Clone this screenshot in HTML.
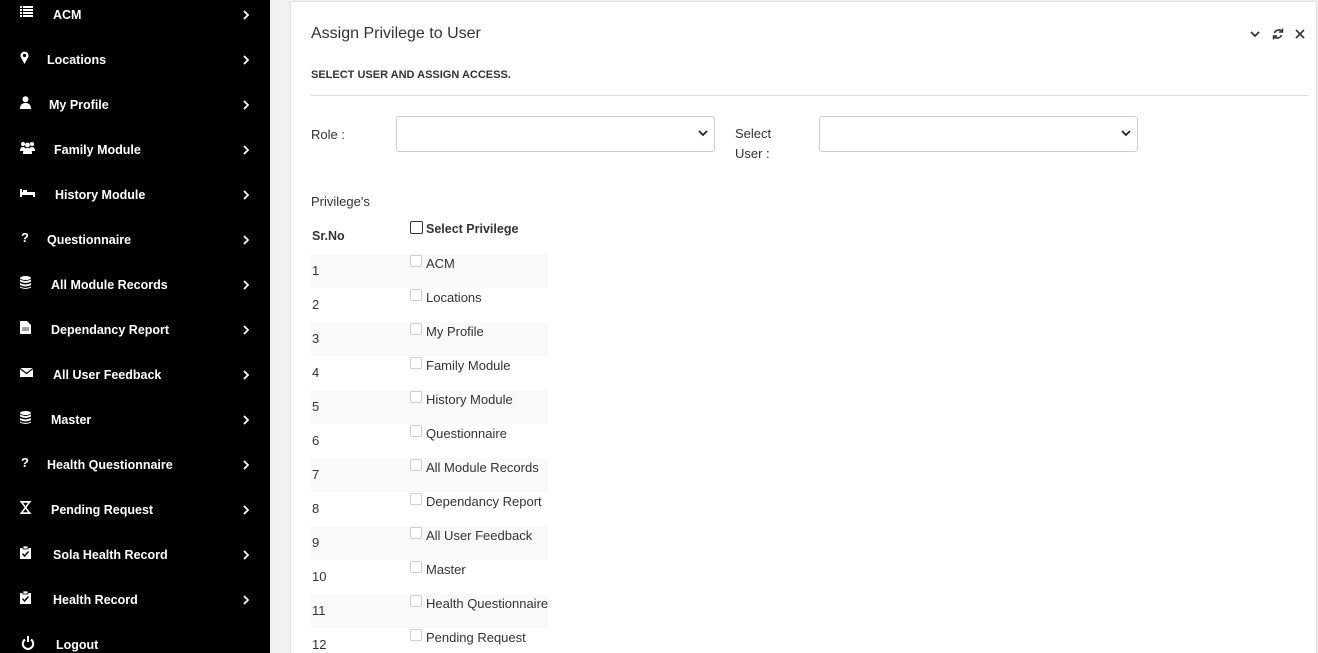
<!DOCTYPE html>
<html><head><meta charset="utf-8"><style>
*{box-sizing:border-box;margin:0;padding:0}
html,body{width:1318px;height:653px;overflow:hidden}
body{background:#f0f0f0;font-family:"Liberation Sans",sans-serif;position:relative}
.sb{position:absolute;left:0;top:1px;width:270px;height:653px;background:#000}
.it{position:absolute;left:0;width:270px;height:20px;color:#fff;font-weight:bold;font-size:12.5px}
.it .ic{position:absolute;left:20px;top:0px;width:14px;height:14px;font-size:13px;line-height:14px;text-align:left}
.it .tx{position:absolute;top:2px}
.it .ch{position:absolute;left:243px;top:4px}
.panel{position:absolute;left:290px;top:1px;width:1027px;height:660px;background:#fff;border:1px solid #e2e2e2;border-radius:3px}
.t{position:absolute;color:#333;font-size:13px}
.sel{position:absolute;height:36px;border:1px solid #ccc;border-radius:3px;background:#fff}
.sel svg{position:absolute;right:6px;top:13px}
.row{position:absolute;left:311px;width:237px;height:34px}
.cb{position:absolute;left:410px;width:12px;height:12px;border:1px solid #ccc;border-radius:2px;background:#fff}
</style></head><body>
<svg width="0" height="0" style="position:absolute"><defs>
<symbol id="chv" viewBox="0 0 6 10"><path d="M1 1l4 4-4 4" stroke="#fff" stroke-width="1.8" fill="none"/></symbol>
<symbol id="db" viewBox="0 0 11 13"><ellipse cx="5.5" cy="2" rx="5.5" ry="2" fill="#fff"/><path d="M0 3.5q5.5 3 11 0v2q-5.5 3-11 0zM0 7q5.5 3 11 0v2q-5.5 3-11 0zM0 10.5q5.5 3 11 0v1q-5.5 3-11 0z" fill="#fff"/></symbol>
<symbol id="clip" viewBox="0 0 11 13"><rect y="2" width="11" height="11" fill="#fff"/><rect x="3" y="0" width="5" height="3" fill="#fff" stroke="#000" stroke-width=".8"/><path d="M2.5 7.5l2 2.5 4-4.5" stroke="#000" fill="none" stroke-width="1.4"/></symbol>
</defs></svg>
<div class="sb" style="top:0"></div>
<div class="sb" style="background:none">
<div class="it" style="top:5px"><span class="ic"><svg width="13" height="11"><rect x="0" y="0" width="2" height="2" fill="#fff"/><rect x="3" y="0" width="10" height="2" fill="#fff"/><rect x="0" y="3" width="2" height="2" fill="#fff"/><rect x="3" y="3" width="10" height="2" fill="#fff"/><rect x="0" y="6" width="2" height="2" fill="#fff"/><rect x="3" y="6" width="10" height="2" fill="#fff"/><rect x="0" y="9" width="2" height="2" fill="#fff"/><rect x="3" y="9" width="10" height="2" fill="#fff"/></svg></span><span class="tx" style="left:53px">ACM</span><svg class="ch" width="6" height="10"><use href="#chv"/></svg></div>
<div class="it" style="top:50px"><span class="ic"><svg width="9" height="13"><path d="M4.5 13L1 6.5A4 4 0 1 1 8 6.5z" fill="#fff"/><circle cx="4.5" cy="4.5" r="1.6" fill="#000"/></svg></span><span class="tx" style="left:47px">Locations</span><svg class="ch" width="6" height="10"><use href="#chv"/></svg></div>
<div class="it" style="top:95px"><span class="ic"><svg width="11" height="13"><circle cx="5.5" cy="3.2" r="3" fill="#fff"/><path d="M0 13q0-6 5.5-6t5.5 6z" fill="#fff"/></svg></span><span class="tx" style="left:49px">My Profile</span><svg class="ch" width="6" height="10"><use href="#chv"/></svg></div>
<div class="it" style="top:140px"><span class="ic"><svg width="15" height="13"><circle cx="3" cy="3" r="2" fill="#fff"/><circle cx="12" cy="3" r="2" fill="#fff"/><circle cx="7.5" cy="4" r="2.4" fill="#fff"/><path d="M0 10q0-4 3-4t3 4zM9 10q0-4 3-4t3 4zM3 13q0-6 4.5-6t4.5 6z" fill="#fff"/></svg></span><span class="tx" style="left:54px">Family Module</span><svg class="ch" width="6" height="10"><use href="#chv"/></svg></div>
<div class="it" style="top:185px"><span class="ic"><svg width="15" height="13"><rect x="0" y="3" width="2" height="8" fill="#fff"/><rect x="0" y="6" width="15" height="3" fill="#fff"/><rect x="3" y="4" width="4" height="2" fill="#fff"/><rect x="13" y="6" width="2" height="5" fill="#fff"/></svg></span><span class="tx" style="left:55px">History Module</span><svg class="ch" width="6" height="10"><use href="#chv"/></svg></div>
<div class="it" style="top:230px"><span class="ic" style="left:21px">?</span><span class="tx" style="left:47px">Questionnaire</span><svg class="ch" width="6" height="10"><use href="#chv"/></svg></div>
<div class="it" style="top:275px"><span class="ic"><svg width="11" height="13"><use href="#db"/></svg></span><span class="tx" style="left:51px">All Module Records</span><svg class="ch" width="6" height="10"><use href="#chv"/></svg></div>
<div class="it" style="top:320px"><span class="ic"><svg width="11" height="13"><path d="M0 0h7l4 4v9H0z" fill="#fff"/><path d="M2 7h7M2 9h7" stroke="#000" stroke-width=".8"/></svg></span><span class="tx" style="left:51px">Dependancy Report</span><svg class="ch" width="6" height="10"><use href="#chv"/></svg></div>
<div class="it" style="top:365px"><span class="ic"><svg width="13" height="13"><rect y="2" width="13" height="9" fill="#fff"/><path d="M0 2.5l6.5 5 6.5-5" stroke="#000" stroke-width="1.2" fill="none"/></svg></span><span class="tx" style="left:53px">All User Feedback</span><svg class="ch" width="6" height="10"><use href="#chv"/></svg></div>
<div class="it" style="top:410px"><span class="ic"><svg width="11" height="13"><use href="#db"/></svg></span><span class="tx" style="left:51px">Master</span><svg class="ch" width="6" height="10"><use href="#chv"/></svg></div>
<div class="it" style="top:455px"><span class="ic" style="left:21px">?</span><span class="tx" style="left:47px">Health Questionnaire</span><svg class="ch" width="6" height="10"><use href="#chv"/></svg></div>
<div class="it" style="top:500px"><span class="ic"><svg width="11" height="13"><path d="M0 0.5h11M0 12.5h11" stroke="#fff" stroke-width="1.6"/><path d="M1.5 1h8L5.5 6.5 9.5 12h-8L5.5 6.5z" stroke="#fff" stroke-width="1.5" fill="none"/></svg></span><span class="tx" style="left:51px">Pending Request</span><svg class="ch" width="6" height="10"><use href="#chv"/></svg></div>
<div class="it" style="top:545px"><span class="ic"><svg width="11" height="13"><use href="#clip"/></svg></span><span class="tx" style="left:53px">Sola Health Record</span><svg class="ch" width="6" height="10"><use href="#chv"/></svg></div>
<div class="it" style="top:590px"><span class="ic"><svg width="11" height="13"><use href="#clip"/></svg></span><span class="tx" style="left:53px">Health Record</span><svg class="ch" width="6" height="10"><use href="#chv"/></svg></div>
<div class="it" style="top:635px"><span class="ic" style="left:21px"><svg width="14" height="14"><path d="M4 3.5A5.2 5.2 0 1 0 10 3.5" stroke="#fff" stroke-width="2" fill="none"/><path d="M7 0v6" stroke="#fff" stroke-width="2"/></svg></span><span class="tx" style="left:56px">Logout</span></div>
</div>
<div class="panel"></div>
<div class="t" style="left:311px;top:25px;font-size:16px">Assign Privilege to User</div>
<svg style="position:absolute;left:1250px;top:28px" width="60" height="12"><path d="M1 4l4 4 4-4" stroke="#333" stroke-width="1.8" fill="none"/><path d="M32.5 4a4.5 4.5 0 0 0-8 1M23.5 8a4.5 4.5 0 0 0 8 -1" stroke="#333" stroke-width="1.6" fill="none"/><path d="M32.5 0.5v3.5h-3.5M23.5 11.5V8h3.5" stroke="#333" stroke-width="1.5" fill="none"/><path d="M46 2l8 8M54 2l-8 8" stroke="#333" stroke-width="1.6"/></svg>
<div class="t" style="left:311px;top:69px;font-size:11px;font-weight:bold">SELECT USER AND ASSIGN ACCESS.</div>
<div style="position:absolute;left:311px;top:95px;width:997px;height:1px;background:#ddd"></div>
<div class="t" style="left:311px;top:127px">Role :</div>
<div class="sel" style="left:396px;top:116px;width:319px"><svg width="10" height="7"><path d="M1 1l4 4 4-4" stroke="#222" stroke-width="1.8" fill="none"/></svg></div>
<div class="t" style="left:735px;top:124px;line-height:20px">Select<br>User :</div>
<div class="sel" style="left:819px;top:116px;width:319px"><svg width="10" height="7"><path d="M1 1l4 4 4-4" stroke="#222" stroke-width="1.8" fill="none"/></svg></div>
<div class="t" style="left:311px;top:194px">Privilege's</div>
<div class="t" style="left:312px;top:229px;font-weight:bold;font-size:12.5px">Sr.No</div>
<div class="cb" style="top:221px;border:1px solid #333;width:13px;height:13px"></div>
<div class="t" style="left:426px;top:222px;font-weight:bold;font-size:12.5px">Select Privilege</div>
<div class="row" style="top:254px;background:#f9f9f9"></div>
<div class="row" style="top:322px;background:#f9f9f9"></div>
<div class="row" style="top:390px;background:#f9f9f9"></div>
<div class="row" style="top:458px;background:#f9f9f9"></div>
<div class="row" style="top:526px;background:#f9f9f9"></div>
<div class="row" style="top:594px;background:#f9f9f9"></div>
<div class="t" style="left:312px;top:263px">1</div><div class="cb" style="top:255px"></div><div class="t" style="left:426px;top:256px">ACM</div>
<div class="t" style="left:312px;top:297px">2</div><div class="cb" style="top:289px"></div><div class="t" style="left:426px;top:290px">Locations</div>
<div class="t" style="left:312px;top:331px">3</div><div class="cb" style="top:323px"></div><div class="t" style="left:426px;top:324px">My Profile</div>
<div class="t" style="left:312px;top:365px">4</div><div class="cb" style="top:357px"></div><div class="t" style="left:426px;top:358px">Family Module</div>
<div class="t" style="left:312px;top:399px">5</div><div class="cb" style="top:391px"></div><div class="t" style="left:426px;top:392px">History Module</div>
<div class="t" style="left:312px;top:433px">6</div><div class="cb" style="top:425px"></div><div class="t" style="left:426px;top:426px">Questionnaire</div>
<div class="t" style="left:312px;top:467px">7</div><div class="cb" style="top:459px"></div><div class="t" style="left:426px;top:460px">All Module Records</div>
<div class="t" style="left:312px;top:501px">8</div><div class="cb" style="top:493px"></div><div class="t" style="left:426px;top:494px">Dependancy Report</div>
<div class="t" style="left:312px;top:535px">9</div><div class="cb" style="top:527px"></div><div class="t" style="left:426px;top:528px">All User Feedback</div>
<div class="t" style="left:312px;top:569px">10</div><div class="cb" style="top:561px"></div><div class="t" style="left:426px;top:562px">Master</div>
<div class="t" style="left:312px;top:603px">11</div><div class="cb" style="top:595px"></div><div class="t" style="left:426px;top:596px">Health Questionnaire</div>
<div class="t" style="left:312px;top:637px">12</div><div class="cb" style="top:629px"></div><div class="t" style="left:426px;top:630px">Pending Request</div>
</body></html>
